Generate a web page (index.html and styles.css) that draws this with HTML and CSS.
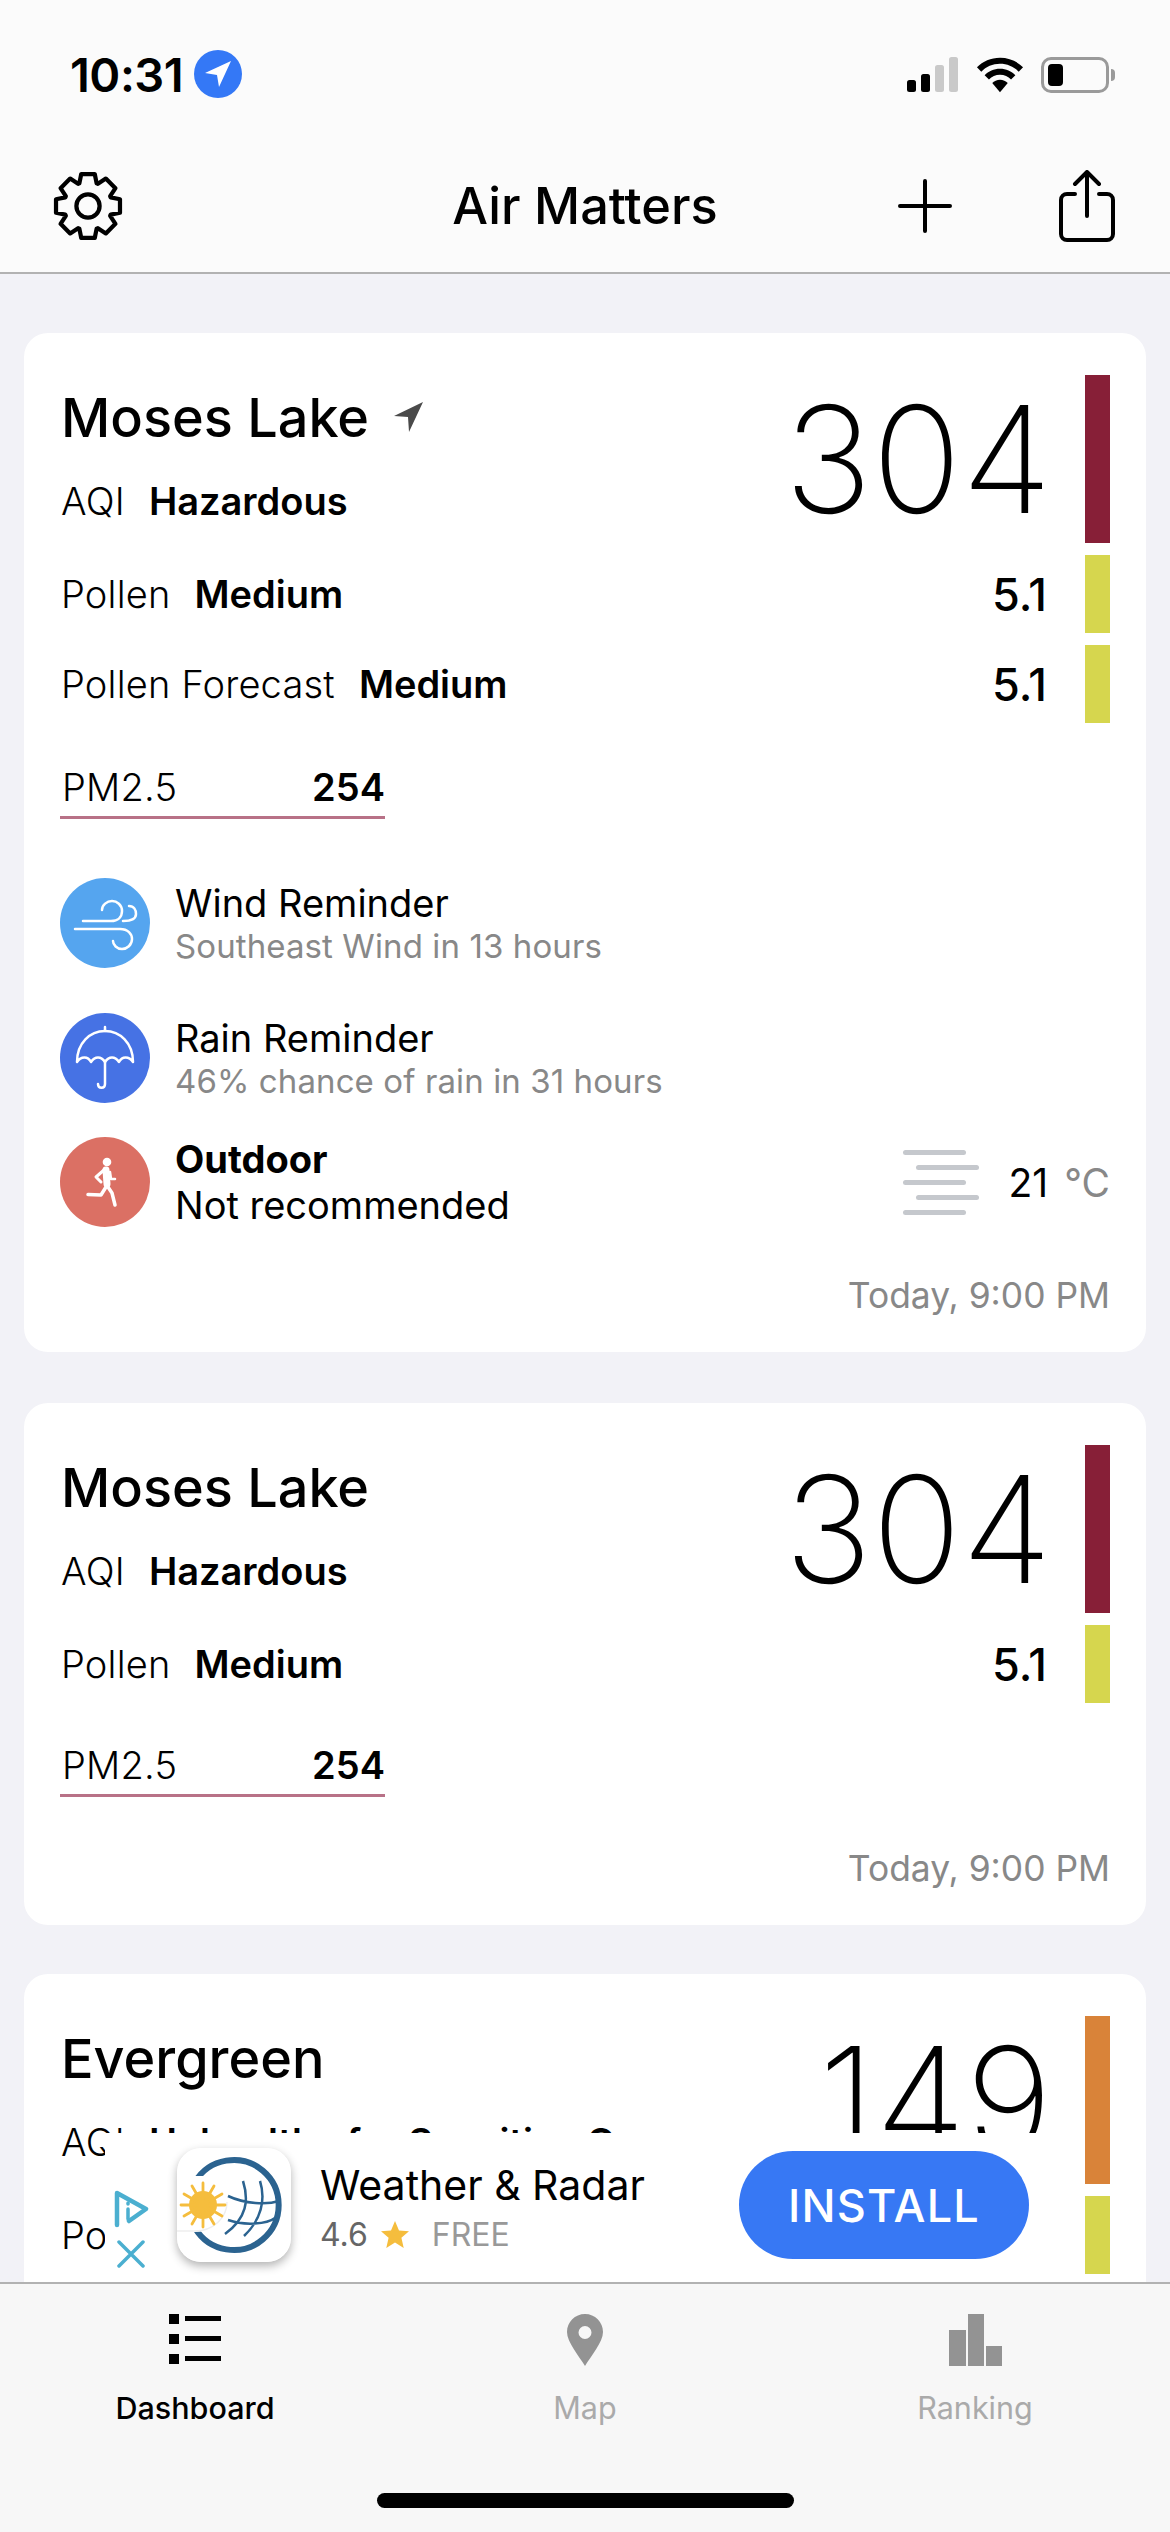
FILE: index.html
```html
<!DOCTYPE html>
<html lang="en">
<head>
<meta charset="UTF-8" />
<meta name="viewport" content="width=device-width, initial-scale=1" />
<title>Air Matters</title>
<link rel="stylesheet" href="styles.css">
</head>
<body>
<div class="phone">

  <!-- Status bar -->
  <div class="statusBar">
    <div class="clock">
      <span>10:31</span>
      <svg class="locDot" viewBox="0 0 48 48"><circle cx="24" cy="24" r="24" fill="#3478f6"/><path d="M37 11 L11 23 L23 25 L25 37 Z" fill="#fff"/></svg>
    </div>
    <div class="statusIcons">
      <svg class="signal" width="52" height="36" viewBox="0 0 52 36">
        <rect x="0" y="23" width="9" height="12" rx="2.5" fill="#000"/>
        <rect x="14" y="17" width="9" height="18" rx="2.5" fill="#000"/>
        <rect x="28" y="8" width="9" height="27" rx="2.5" fill="#c9c9c9"/>
        <rect x="42" y="0" width="9" height="35" rx="2.5" fill="#c9c9c9"/>
      </svg>
      <svg class="wifi" width="48" height="36" viewBox="0 0 50 36">
        <path d="M25 0C15.500 0 7 3.800 1 10l4.500 4.500C10.500 9.400 17.400 6.300 25 6.300s14.500 3.100 19.500 8.200L49 10C43 3.800 34.500 0 25 0z" fill="#000"/>
        <path d="M25 11.500c-6.300 0-12 2.600-16 6.700l4.500 4.500c2.900-3 7-4.900 11.500-4.900s8.600 1.900 11.500 4.900l4.500-4.500c-4-4.100-9.700-6.700-16-6.700z" fill="#000"/>
        <path d="M25 23c-3.200 0-6.100 1.300-8.100 3.400L25 36l8.100-9.600C31.100 24.300 28.200 23 25 23z" fill="#000"/>
      </svg>
      <div class="battery">
        <div class="batteryBody"><div class="batteryLevel"></div></div>
        <div class="batteryNub"></div>
      </div>
    </div>
  </div>

  <!-- Nav bar -->
  <div class="navBar">
    <svg class="navGear" width="76" height="76" viewBox="-36 -36 72 72" fill="none" stroke="#000" stroke-width="4" stroke-linejoin="round">
      <circle cx="0" cy="0" r="11"/>
      <path d="M6.400 -30.300L8.200 -21.500L9.400 -21L16.900 -26L26 -16.900L21 -9.400L21.500 -8.200L30.300 -6.400V6.400L21.500 8.200L21 9.400L26 16.900L16.900 26L9.400 21L8.200 21.500L6.400 30.300H-6.400L-8.200 21.500L-9.400 21L-16.900 26L-26 16.900L-21 9.400L-21.500 8.200L-30.300 6.400V-6.400L-21.500 -8.200L-21 -9.400L-26 -16.900L-16.900 -26L-9.400 -21L-8.200 -21.500L-6.400 -30.300Z"/>
    </svg>
    <div class="navTitle">Air Matters</div>
    <div class="navRight">
      <svg width="54" height="54" viewBox="0 0 54 54" stroke="#000" stroke-width="4" stroke-linecap="round"><path d="M27 2V52M2 27H52"/></svg>
      <svg width="56" height="72" viewBox="0 0 56 72" fill="none" stroke="#000" stroke-width="4" stroke-linecap="round" stroke-linejoin="round">
        <path d="M16 24H8a6 6 0 0 0-6 6V64a6 6 0 0 0 6 6H48a6 6 0 0 0 6-6V30a6 6 0 0 0-6-6H40"/>
        <path d="M28 46V3M16 14L28 2L40 14"/>
      </svg>
    </div>
  </div>

  <!-- Dashboard cards -->
  <div class="content">

    <div class="card cardFull">
      <div class="metric metricMain">
        <div class="metricText">
          <div class="cityName">Moses Lake
            <svg class="cityArrow" width="30" height="31" viewBox="0 0 30 31"><path d="M29 0L0 14L14 15L15 30Z" fill="#4a4a4a"/></svg>
          </div>
          <div class="metricLine"><span class="lbl">AQI</span><b>Hazardous</b></div>
        </div>
        <div class="bigValue">304</div>
        <div class="levelBar barHazard"></div>
      </div>
      <div class="metric">
        <div class="metricLine"><span class="lbl">Pollen</span><b>Medium</b></div>
        <div class="smallValue">5.1</div>
        <div class="levelBar barMedium"></div>
      </div>
      <div class="metric">
        <div class="metricLine"><span class="lbl">Pollen Forecast</span><b>Medium</b></div>
        <div class="smallValue">5.1</div>
        <div class="levelBar barMedium"></div>
      </div>
      <div class="pollutant"><span class="lbl">PM2.5</span><b>254</b></div>

      <div class="reminders">
        <div class="reminder">
          <svg class="reminderIcon" viewBox="0 0 90 90">
            <circle cx="45" cy="45" r="45" fill="#55a5ef"/>
            <path d="M15 51H60C68 51 72 56 72 61C72 67 67 71 62 71C57 71 53 67 53 63" fill="none" stroke="#fff" stroke-width="2.500" stroke-linecap="round"/>
            <path d="M23 43H51C58 43 62 39 62 33C62 27 57 23 52 23C47 23 42 27 42 32" fill="none" stroke="#fff" stroke-width="2.500" stroke-linecap="round"/>
            <path d="M69 28C74 28 76 32 76 36C76 40 73 43 63 43" fill="none" stroke="#fff" stroke-width="2.500" stroke-linecap="round"/>
          </svg>
          <div class="reminderText">
            <div class="reminderTitle">Wind Reminder</div>
            <div class="reminderSub">Southeast Wind in 13 hours</div>
          </div>
        </div>
        <div class="reminder reminderRain">
          <svg class="reminderIcon" viewBox="0 0 90 90">
            <circle cx="45" cy="45" r="45" fill="#4672e4"/>
            <path d="M17 49C17 30 30 18 45 18C60 18 73 30 73 49C69 43 62 43 59 49C55 43 49 43 45 49C41 43 35 43 31 49C28 43 21 43 17 49Z" fill="none" stroke="#fff" stroke-width="2.500" stroke-linejoin="round"/>
            <path d="M45 14V18M45 48V71C45 76 38 76 38 71" fill="none" stroke="#fff" stroke-width="2.500" stroke-linecap="round"/>
          </svg>
          <div class="reminderText">
            <div class="reminderTitle">Rain Reminder</div>
            <div class="reminderSub">46% chance of rain in 31 hours</div>
          </div>
        </div>
        <div class="reminder reminderOutdoor">
          <svg class="reminderIcon" viewBox="0 0 90 90">
            <circle cx="45" cy="45" r="45" fill="#db7064"/>
            <circle cx="47" cy="25" r="4.300" fill="#fff"/>
            <g fill="none" stroke="#fff" stroke-linecap="round" stroke-linejoin="round">
              <path d="M46 33L47 47" stroke-width="7"/>
              <path d="M44 33L36 40L41 45" stroke-width="3"/>
              <path d="M50 35L51 42H55" stroke-width="2.500"/>
              <path d="M46 50L41 58L28 57.500" stroke-width="3.500"/>
              <path d="M48 50L52 56L55 68" stroke-width="3.500"/>
            </g>
          </svg>
          <div class="reminderText">
            <div class="reminderTitle"><b>Outdoor</b></div>
            <div class="reminderTitle">Not recommended</div>
          </div>
          <div class="weather">
            <div class="hazeIcon">
              <i></i><i class="shift"></i><i></i><i class="shift"></i><i></i>
            </div>
            <div class="temp">21<span class="unit">°C</span></div>
          </div>
        </div>
      </div>
      <div class="updated updatedTall">Today, 9:00 PM</div>
    </div>

    <div class="card cardShort">
      <div class="metric metricMain">
        <div class="metricText">
          <div class="cityName">Moses Lake</div>
          <div class="metricLine"><span class="lbl">AQI</span><b>Hazardous</b></div>
        </div>
        <div class="bigValue">304</div>
        <div class="levelBar barHazard"></div>
      </div>
      <div class="metric">
        <div class="metricLine"><span class="lbl">Pollen</span><b>Medium</b></div>
        <div class="smallValue">5.1</div>
        <div class="levelBar barMedium"></div>
      </div>
      <div class="pollutant"><span class="lbl">PM2.5</span><b>254</b></div>
      <div class="updated">Today, 9:00 PM</div>
    </div>

    <div class="card">
      <div class="metric metricMain">
        <div class="metricText">
          <div class="cityName">Evergreen</div>
          <div class="metricLine"><span class="lbl">AQI</span><b>Unhealthy for Sensitive G...</b></div>
        </div>
        <div class="bigValue">149</div>
        <div class="levelBar barUnhealthy"></div>
      </div>
      <div class="metric">
        <div class="metricLine"><span class="lbl">Pollen</span><b>Medium</b></div>
        <div class="smallValue">5.1</div>
        <div class="levelBar barMedium"></div>
      </div>
    </div>

    <!-- Ad banner floats over the list -->
    <div class="adBanner">
      <div class="adChoices">
        <svg width="36" height="38" viewBox="0 0 36 38" fill="none" stroke="#4bafd0" stroke-linejoin="round" stroke-linecap="round">
          <path d="M4 35V3L33 19L16 31" stroke-width="4.500"/>
          <path d="M15 13V14M15 19V29" stroke-width="3.500"/>
        </svg>
        <svg width="28" height="28" viewBox="0 0 28 28" stroke="#4bafd0" stroke-width="3.500" stroke-linecap="round"><path d="M2 2L26 26M26 2L2 26"/></svg>
      </div>
      <svg class="adIcon" width="114" height="114" viewBox="0 0 114 114">
        <rect width="114" height="114" rx="24" fill="#fff"/>
        <path d="M18 34A45 45 0 1 1 18 80" fill="none" stroke="#2b6390" stroke-width="6"/>
        <path d="M51 48C68 56 90 57 102 53M51 72C68 78 90 76 98 70M66 33C72 52 70 70 48 86M83 33C89 52 84 72 67 88" fill="none" stroke="#2b6390" stroke-width="2.500"/>
        <path d="M0 84H18C38 84 52 72 50 52C49 40 45 34 40 28H0Z" fill="#fff"/>
        <path d="M0 83H18C36 83 50 70 50 54" fill="none" stroke="#eee" stroke-width="1.500"/>
        <circle cx="26" cy="57" r="14" fill="#f5bd3d"/>
        <path d="M26 35V79M4 57H48M37 38L15 76M15 38L37 76M45 46L7 68M7 46L45 68" stroke="#f5bd3d" stroke-width="2.800" stroke-linecap="round"/>
      </svg>
      <div class="adInfo">
        <div class="adName">Weather &amp; Radar</div>
        <div class="adMeta">
          <span class="adRating">4.6</span>
          <svg width="28" height="27" viewBox="0 0 28 27"><path d="M14 0L18 9.500L28 10.300L20.400 16.800L22.700 27L14 21.500L5.300 27L7.600 16.800L0 10.300L10 9.500Z" fill="#f5bd3d"/></svg>
          <span class="adPrice">FREE</span>
        </div>
      </div>
      <div class="installBtn">INSTALL</div>
    </div>
  </div>

  <!-- Tab bar -->
  <div class="tabBar">
    <div class="tabs">
      <div class="tab tabActive">
        <div class="tabIcon">
          <svg width="52" height="50" viewBox="0 0 52 50" fill="#000">
            <rect x="0" y="0" width="10" height="10"/><rect x="16" y="2" width="36" height="5"/>
            <rect x="0" y="20" width="10" height="10"/><rect x="16" y="22" width="36" height="5"/>
            <rect x="0" y="40" width="10" height="10"/><rect x="16" y="42" width="36" height="5"/>
          </svg>
        </div>
        <div class="tabLabel">Dashboard</div>
      </div>
      <div class="tab">
        <div class="tabIcon">
          <svg width="36" height="52" viewBox="0 0 36 52"><path fill-rule="evenodd" d="M18 0C8 0 0 8 0 18C0 28 12 42 18 52C24 42 36 28 36 18C36 8 28 0 18 0ZM18 12A6.500 6.500 0 1 1 18 25A6.500 6.500 0 1 1 18 12Z" fill="#939393"/></svg>
        </div>
        <div class="tabLabel">Map</div>
      </div>
      <div class="tab">
        <div class="tabIcon">
          <svg width="53" height="52" viewBox="0 0 53 52" fill="#939393">
            <rect x="0" y="16" width="17" height="36"/><rect x="19" y="0" width="16" height="52"/><rect x="37" y="32" width="16" height="20"/>
          </svg>
        </div>
        <div class="tabLabel">Ranking</div>
      </div>
    </div>
    <div class="homeIndicator"></div>
  </div>

</div>
</body>
</html>
```

FILE: styles.css
```css
* { box-sizing: border-box; }
body {
  margin: 0; background: #f2f2f7; color: #000;
  font-family: Inter, "Liberation Sans", sans-serif;
  overflow: hidden;
}
.phone {
  width: 1170px;
  height: 2532px;
  display: flex;
  flex-direction: column;
  overflow: hidden;
}

/* Status bar */
.statusBar {
  height: 150px;
  padding: 50px 55px 0 70px;
  display: flex;
  justify-content: space-between;
  align-items: flex-start;
  background: #fbfbfb;
}
.clock {
  display: flex;
  align-items: center;
  gap: 11px;
  height: 48px;
  font-size: 47px;
  font-weight: 600;
  letter-spacing: -0.5px;
}
.locDot { width: 48px; height: 48px; }
.statusIcons {
  display: flex;
  align-items: center;
  gap: 17px;
  height: 48px;
  padding-top: 2px;
}
.battery { display: flex; align-items: center; gap: 2px; }
.batteryBody {
  width: 68px;
  height: 36px;
  border: 3px solid #9a9a9a;
  border-radius: 10px;
  padding: 4px;
}
.batteryLevel {
  width: 15px;
  height: 100%;
  background: #000;
  border-radius: 4px;
}
.batteryNub {
  width: 4px;
  height: 12px;
  background: #9a9a9a;
  border-radius: 0 6px 6px 0;
}

/* Nav bar */
.navBar {
  height: 124px;
  padding: 0 55px 11px 50px;
  display: flex;
  align-items: center;
  justify-content: space-between;
  position: relative;
  background: #fbfbfb;
  border-bottom: 2px solid #b2b2b2;
}
.navTitle {
  position: absolute;
  left: 0;
  right: 0;
  text-align: center;
  font-size: 50.5px;
  font-weight: 500;
}
.navRight {
  display: flex;
  align-items: center;
  gap: 107px;
}

/* Cards */
.content {
  flex: 1;
  min-height: 0;
  overflow: hidden;
  position: relative;
  padding: 59px 24px 0;
  display: flex;
  flex-direction: column;
  gap: 49px;
}
.card {
  flex: none;
  background: white;
  border-radius: 24px;
  padding: 42px 36px 34px 37px;
  display: flex;
  flex-direction: column;
  gap: 12px;
}
.cardFull { margin-bottom: 2px; }
.metric {
  display: flex;
  align-items: center;
  height: 78px;
}
.metricMain { height: 168px; }
.metricText { display: flex; flex-direction: column; gap: 28px; margin-bottom: 8px; }
.cityName {
  font-size: 54px;
  line-height: 64px;
  font-weight: 500;
  display: flex;
  align-items: center;
  gap: 25px;
}
.cityArrow { margin-top: -2px; }
.metricLine {
  display: flex;
  gap: 24px;
  font-size: 38px;
  line-height: 46px;
  white-space: nowrap;
}
.lbl { font-weight: 300; letter-spacing: 0.2px; }
.metricLine b, .pollutant b { font-weight: 560; }
.bigValue {
  margin-left: auto;
  margin-right: 33px;
  font-size: 148px;
  font-weight: 170;
}
.smallValue {
  margin-left: auto;
  margin-right: 38px;
  font-size: 45px;
  font-weight: 500;
}
.levelBar { flex: none; width: 25px; height: 100%; }
.barHazard { background: #871f37; }
.barMedium { background: #d6d64e; }
.barUnhealthy { background: #d98339; }

.pollutant {
  width: 325px;
  margin: 29px 0 0 -1px;
  padding: 0 0 6px 2px;
  display: flex;
  justify-content: space-between;
  font-size: 38px;
  line-height: 46px;
  border-bottom: 3px solid #b87187;
}
.cardShort .pollutant { margin-top: 27px; }

/* Reminders */
.reminders { display: flex; flex-direction: column; margin: 47px 0 0 -1px; }
.reminder { display: flex; align-items: center; gap: 25px; height: 90px; }
.reminderRain { margin-top: 45px; }
.reminderOutdoor { margin-top: 34px; }
.reminderIcon { width: 90px; height: 90px; flex: none; }
.reminderTitle { font-size: 38px; line-height: 46px; }
.reminderTitle b { font-weight: 700; }
.reminderSub { font-size: 33px; line-height: 40px; color: #888; letter-spacing: 0.1px; }
.weather {
  margin-left: auto;
  display: flex;
  align-items: center;
  gap: 30px;
}
.hazeIcon { width: 76px; display: flex; flex-direction: column; gap: 10px; }
.hazeIcon i {
  display: block;
  width: 63px;
  height: 5px;
  border-radius: 3px;
  background: #c5c8cd;
}
.hazeIcon i.shift { margin-left: 13px; }
.temp { font-size: 39px; }
.unit { color: #888; margin-left: 16px; }

.updated {
  margin-top: 38px;
  text-align: right;
  font-size: 35.4px;
  line-height: 44px;
  color: #888;
}
.updatedTall { margin-top: 35px; }

/* Ad banner */
.adBanner {
  position: absolute;
  left: 105px;
  width: 955px;
  top: 1859px;
  height: 149px;
  padding-bottom: 5px;
  background: white;
  display: flex;
  align-items: center;
}
.adChoices {
  width: 72px;
  display: flex;
  flex-direction: column;
  align-items: center;
  gap: 12px;
  margin-top: 47px;
  padding-right: 20px;
}
.adIcon {
  flex: none;
  border-radius: 24px;
  box-shadow: 0 4px 10px rgba(0,0,0,0.3);
}
.adInfo { margin-left: 29px; margin-top: 5px; flex: 1; }
.adName { font-size: 41px; line-height: 50px; }
.adMeta {
  display: flex;
  align-items: center;
  gap: 13px;
  font-size: 32px;
  line-height: 42px;
  margin-top: 4px;
}
.adRating { color: #666; }
.adPrice { color: #999; margin-left: 10px; }
.installBtn {
  width: 290px;
  height: 108px;
  margin-right: 31px;
  border-radius: 54px;
  background: #3778f4;
  color: white;
  font-size: 45px;
  font-weight: 500;
  letter-spacing: 1.2px;
  display: flex;
  align-items: center;
  justify-content: center;
}

/* Tab bar */
.tabBar {
  height: 250px;
  flex: none;
  background: #f7f7f7;
  border-top: 2px solid #b2b2b2;
  position: relative;
}
.tabs { display: flex; padding-top: 30px; }
.tab {
  flex: 1;
  display: flex;
  flex-direction: column;
  align-items: center;
  color: #aaa;
  font-size: 30.5px;
}
.tabIcon { height: 52px; }
.tabLabel { margin-top: 22px; line-height: 40px; }
.tabActive { color: #000; }
.tabActive .tabLabel { font-weight: 500; }
.homeIndicator {
  position: absolute;
  left: 377px;
  top: 209px;
  width: 417px;
  height: 15px;
  border-radius: 8px;
  background: #000;
}
```
